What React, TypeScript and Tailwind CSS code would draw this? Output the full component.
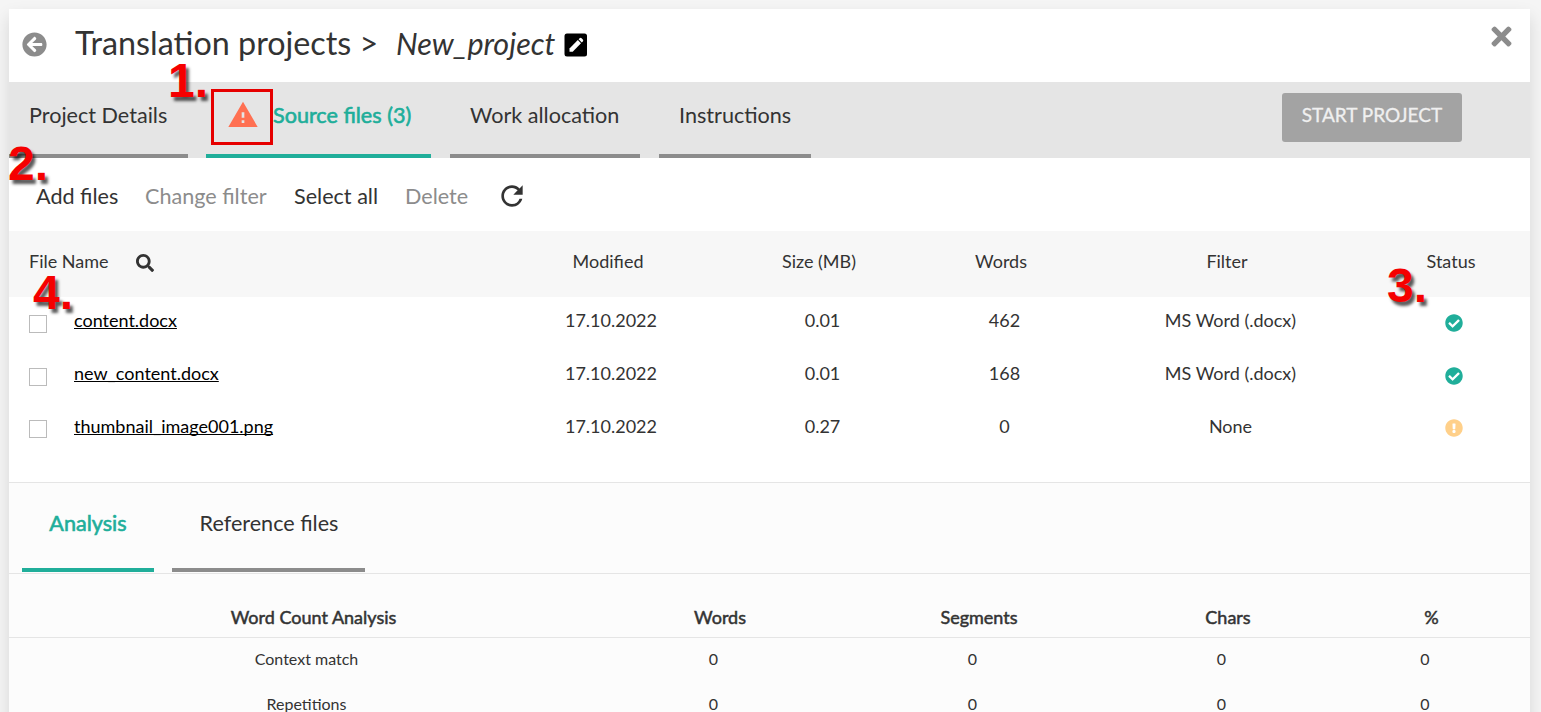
import type { ReactNode } from "react";
import {
  FaArrowCircleLeft,
  FaCheckCircle,
  FaExclamationCircle,
  FaSearch,
  FaTimes,
} from "react-icons/fa";
import { MdRefresh, MdWarning } from "react-icons/md";

interface SourceFile {
  name: string;
  modified: string;
  size: string;
  words: string;
  filter: string;
  ok: boolean;
}

const files: SourceFile[] = [
  { name: "content.docx", modified: "17.10.2022", size: "0.01", words: "462", filter: "MS Word (.docx)", ok: true },
  { name: "new_content.docx", modified: "17.10.2022", size: "0.01", words: "168", filter: "MS Word (.docx)", ok: true },
  { name: "thumbnail_image001.png", modified: "17.10.2022", size: "0.27", words: "0", filter: "None", ok: false },
];

const analysis = ["Context match", "Repetitions"];

const fileGrid = "grid grid-cols-[492px_214px_208px_156px_296px_152px]";
const analysisGrid = "grid grid-cols-[609px_204px_314px_184px_223px]";

function EditIcon() {
  return (
    <svg viewBox="0 0 24 24" className="h-6 w-6">
      <rect x="0.5" y="0.5" width="22.5" height="23" rx="2.5" fill="#000" />
      <path d="M5.5 18.8v-3.4l8.3-8.3 3.2 3.2-8.3 8.5z" fill="#fff" />
      <path d="M14.6 6.3l1-1a1.4 1.4 0 0 1 2 0l1.2 1.2a1.4 1.4 0 0 1 0 2l-1 1z" fill="#fff" />
    </svg>
  );
}

function Marker({ className, children }: { className: string; children: ReactNode }) {
  return (
    <span
      className={`absolute font-['Liberation_Sans',sans-serif] text-[48px] leading-[48px] font-bold whitespace-nowrap text-[#f50000] [text-shadow:3px_4px_3px_rgba(0,0,0,0.65)] ${className}`}
    >
      {children}
    </span>
  );
}

export default function App() {
  return (
    <div className="relative h-[712px] w-[1541px] overflow-hidden bg-[#f5f5f5] pt-[9px] pr-[11px] pl-[9px] font-['Lato',sans-serif] text-[#333]">
      <main className="h-[760px] bg-white shadow-[0_8px_16px_rgba(0,0,0,0.13)]">
        {/* Title */}
        <header className="flex h-[73px] items-start pl-[13px]">
          <FaArrowCircleLeft className="mt-[23px] h-[25px] w-[25px] text-[#8c8c8c]" />
          <h1 className="ml-[28px] w-[321px] pt-[14px] text-[32.3px] leading-10 whitespace-nowrap">
            Translation projects &gt;
          </h1>
          <span className="w-[168px] pt-[14px] text-[30.5px] leading-10 whitespace-nowrap italic">New_project</span>
          <div className="mt-[24px]">
            <EditIcon />
          </div>
          <FaTimes className="mt-[13px] mr-[14px] ml-auto h-[29px] w-[29px] text-[#8c8c8c]" />
        </header>

        {/* Main tabs */}
        <nav className="flex h-[76px] bg-[#e5e5e5] text-[21.6px] leading-7 whitespace-nowrap">
          <div className="mr-[18px] w-[179px] border-b-4 border-[#8c8c8c] pt-[19px] pl-5">Project Details</div>
          <div className="mr-[19px] flex w-[225px] border-b-4 border-[#20ae9a] pl-[5px] text-[#20ae9a]">
            <div className="mt-[7px] flex h-[56px] w-[62px] items-center justify-center border-3 border-[#e60000] pb-[4px] pl-[2px]">
              <MdWarning className="h-[32px] w-[32px] shrink-0 text-[#ff7052]" />
            </div>
            <span className="pt-[19px] [-webkit-text-stroke:0.6px_#20ae9a]">Source files (3)</span>
          </div>
          <div className="mr-[19px] w-[190px] border-b-4 border-[#8c8c8c] pt-[19px] pl-5">Work allocation</div>
          <div className="w-[152px] border-b-4 border-[#8c8c8c] pt-[19px] pl-5">Instructions</div>
          <button
            type="button"
            className="mt-[11px] mr-[68px] ml-auto h-[49px] w-[180px] rounded-[3px] bg-[#a3a3a3] pb-1.5 text-[19px] text-[#f0f0f0] [-webkit-text-stroke:0.3px_#f0f0f0]"
          >
            START PROJECT
          </button>
        </nav>

        {/* Toolbar */}
        <div className="flex h-[73px] pt-[24px] pl-[27px] text-[21.6px] leading-7 whitespace-nowrap">
          <span className="w-[109px]">Add files</span>
          <span className="w-[149px] text-[#8c8c8c]">Change filter</span>
          <span className="w-[111px]">Select all</span>
          <span className="w-[91px] text-[#8c8c8c]">Delete</span>
          <MdRefresh className="-mt-[2px] h-[32px] w-[32px]" />
        </div>

        {/* Source files table */}
        <section className="h-[251px] text-[18px] leading-6 whitespace-nowrap">
          <div className={`${fileGrid} h-[66px] bg-[#f7f7f7] pt-[18px] text-center`}>
            <div className="flex pl-5">
              <span className="w-[107px] text-left">File Name</span>
              <FaSearch className="mt-[5px] h-[18px] w-[18px]" />
            </div>
            <span>Modified</span>
            <span>Size (MB)</span>
            <span>Words</span>
            <span>Filter</span>
            <span>Status</span>
          </div>
          {files.map((file) => (
            <div key={file.name} className={`${fileGrid} h-[53px] pt-[11px] text-center`}>
              <div className="flex pl-5">
                <span
                  className={`mr-[27px] h-[18px] w-[18px] border border-[#bbb] bg-white ${file.ok ? "mt-[7px]" : "mt-[6px]"}`}
                />
                <span className="text-black underline [text-decoration-skip-ink:none]">{file.name}</span>
              </div>
              <span className="pl-[6px]">{file.modified}</span>
              <span className="pl-[7px]">{file.size}</span>
              <span className="pl-[7px]">{file.words}</span>
              <span className="pl-[7px]">{file.filter}</span>
              <span className="flex justify-center pt-[6px] pl-[6px]">
                {file.ok ? (
                  <FaCheckCircle className="h-[18px] w-[18px] text-[#20ae9a]" />
                ) : (
                  <FaExclamationCircle className="-mt-px h-[18px] w-[18px] text-[#ffd08a]" />
                )}
              </span>
            </div>
          ))}
        </section>

        {/* Analysis */}
        <section className="h-[287px] border-t border-[#e5e5e5] bg-[#fcfcfc] whitespace-nowrap">
          <nav className="flex h-[91px] border-b border-[#e5e5e5] pb-px pl-[13px] text-[21.6px] leading-7">
            <div className="mr-[18px] w-[132px] border-b-4 border-[#20ae9a] pt-[26px] text-center text-[#20ae9a] [-webkit-text-stroke:0.6px_#20ae9a]">
              Analysis
            </div>
            <div className="w-[193px] border-b-4 border-[#8c8c8c] pt-[26px] pl-px text-center">Reference files</div>
          </nav>
          <div
            className={`${analysisGrid} h-[64px] border-b border-[#e5e5e5] pt-[31px] text-center text-[18px] leading-6 [-webkit-text-stroke:0.5px_#333]`}
          >
            <span>Word Count Analysis</span>
            <span>Words</span>
            <span>Segments</span>
            <span>Chars</span>
            <span>%</span>
          </div>
          {analysis.map((label) => (
            <div key={label} className={`${analysisGrid} h-[45px] pt-[9px] text-center text-[16px] leading-6`}>
              <span className="pr-[14px]">{label}</span>
              <span className="pr-[13px]">0</span>
              <span className="pr-[13px]">0</span>
              <span className="pr-[13px]">0</span>
              <span className="pr-[13px]">0</span>
            </div>
          ))}
        </section>
      </main>

      {/* Step callouts */}
      <Marker className="top-[57px] left-[168px]">1.</Marker>
      <Marker className="top-[140px] left-[8px]">2.</Marker>
      <Marker className="top-[262px] left-[1387px]">3.</Marker>
      <Marker className="top-[269px] left-[33px]">4.</Marker>
    </div>
  );
}
